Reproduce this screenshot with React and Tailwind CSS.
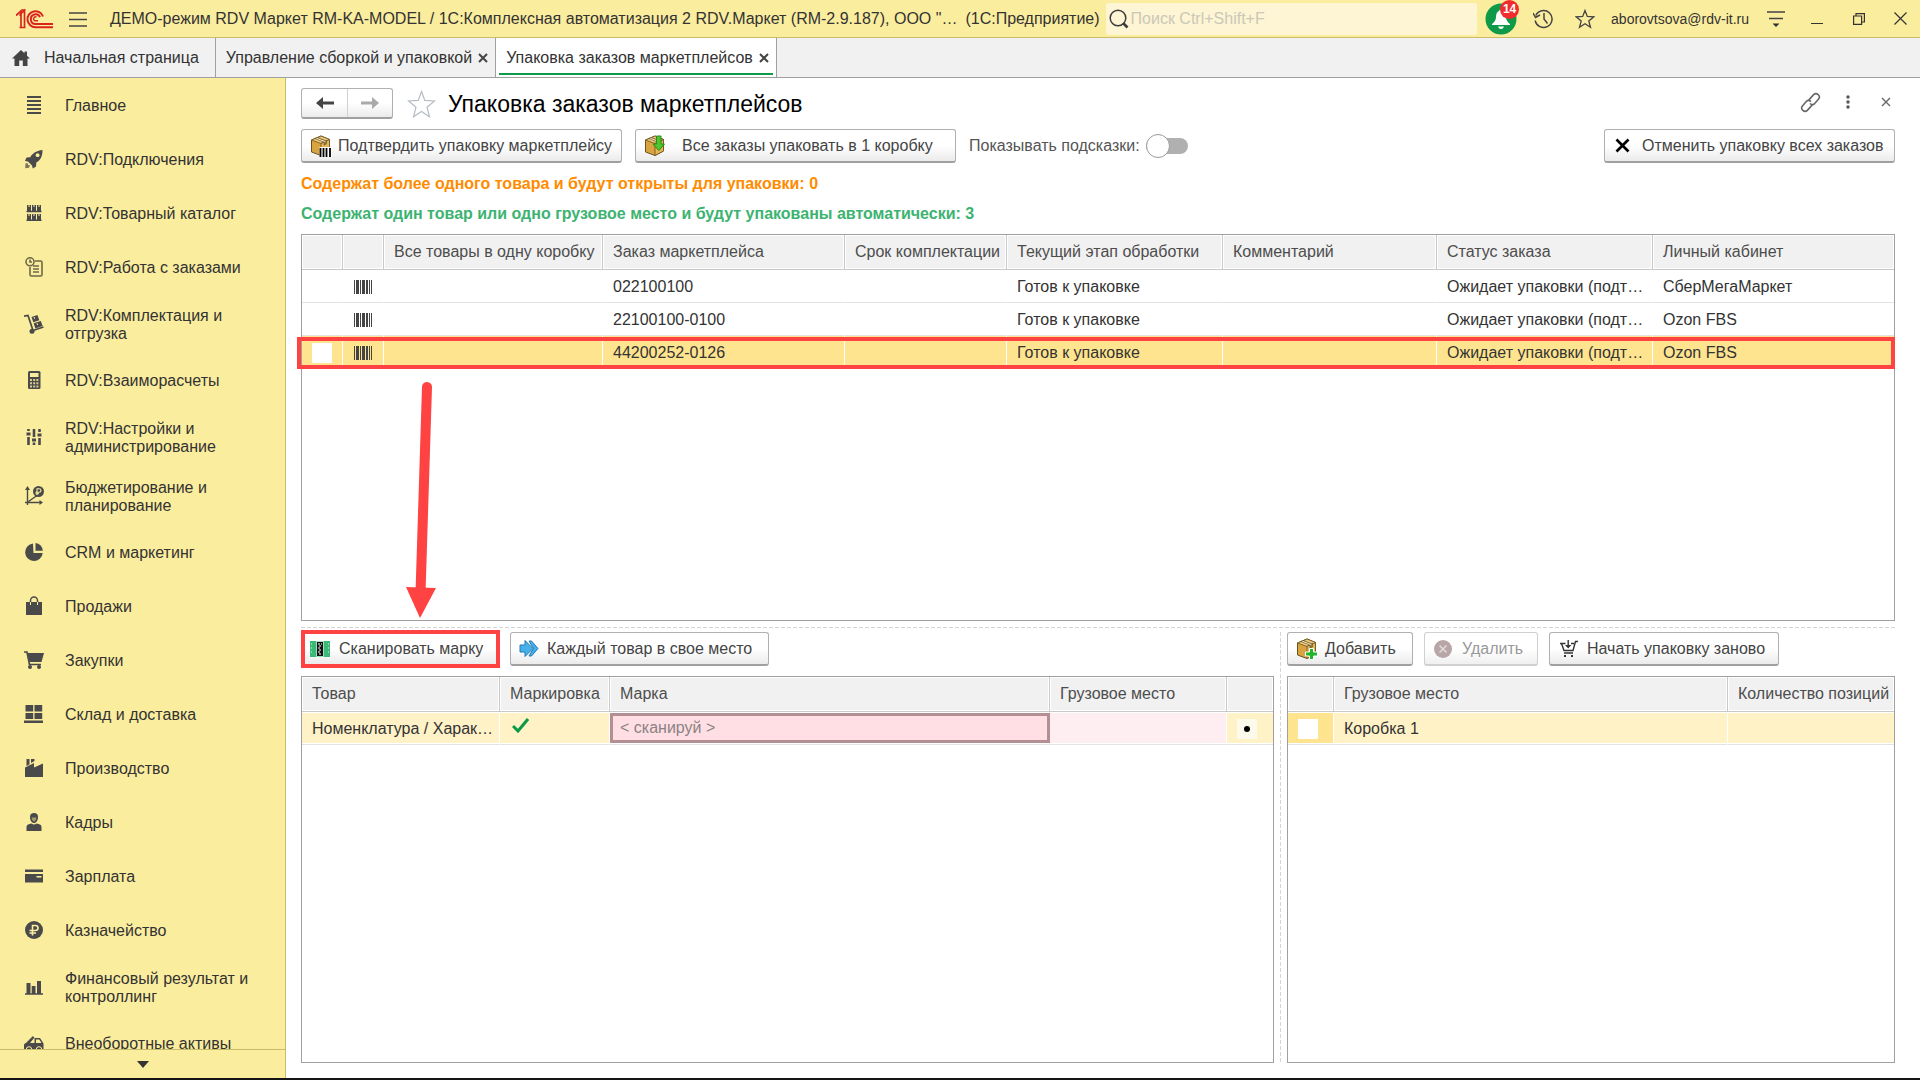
import React from "react";

const BARCODE = [[0, 1], [2, 3], [6, 1], [8, 3], [12, 2], [15, 1], [17, 1]];

function BarcodeIcon() {
  return (
    <svg className="mx-auto block" width="18" height="14" viewBox="0 0 18 14" fill="#444" aria-hidden="true">
      {BARCODE.map(([x, w]) => (
        <rect key={x} x={x} y="0" width={w} height="14" />
      ))}
    </svg>
  );
}

function Box({ children }) {
  return (
    <svg className="shrink-0" width="22" height="22" viewBox="0 0 22 22" aria-hidden="true">
      <path d="M1.5 5 11 1l8.500 3.500V16L11 20.500 1.500 17Z" fill="#d9a440" stroke="#6b5220" strokeWidth="1" />
      <path d="M1.500 5 11 1l8.500 3.500L11 8.500Z" fill="#efc978" stroke="#6b5220" strokeWidth=".8" />
      <path d="M11 8.500v12l8.500-4.500V4.500Z" fill="#e6b658" stroke="#6b5220" strokeWidth=".8" />
      <path d="m5 3.600 9 3.600v3l2.500-1.200V6L7.500 2.500Z" fill="#8d7a4d" stroke="#5d4a22" strokeWidth=".5" />
      <path d="m6.200 3.200 9 3.500" stroke="#f6e6bd" strokeWidth="1" />
      {children}
    </svg>
  );
}

const BoxBarcode = () => (
  <Box>
    <rect x="9.500" y="12" width="12.500" height="10" fill="#fff" />
    <path d="M10.500 13v9M13.500 13v9M16.500 13v9M20 13v9" stroke="#000" strokeWidth="1.800" />
  </Box>
);
const BoxDown = () => (
  <Box>
    <path d="M12.500 1h4.500v8h3.500l-5.700 6.500L9 9h3.500Z" fill="#4fc52f" stroke="#2a8a1b" strokeWidth="1" />
  </Box>
);
const BoxPlus = () => (
  <Box>
    <path d="M13.500 10.500h4v3.500h4v4h-4v3.500h-4V18h-4v-4h4Z" fill="#22b52c" stroke="#fff" strokeWidth="1" />
  </Box>
);

const NAV = [
  {
    label: ["Главное"],
    icon: <path d="M3 2h14M3 6h14M3 10h14M3 14h14M3 18h14" stroke="#4a4a4a" strokeWidth="1.800" />,
  },
  {
    label: ["RDV:Подключения"],
    icon: (
      <g>
        <path d="M18.500 1C12 1.500 8 5 6.200 8.200L2.500 8.500 1 12l3 .5 4 4 .8 3 3.200-2 .3-4C16 11.500 18.500 8 18.500 1Z" />
        <circle cx="13.600" cy="6.200" r="1.900" fill="#fbed9e" />
        <path d="m1.500 14.500 2-.5.500 2 2 .3-1 2.500-3.800.4Z" opacity=".75" />
      </g>
    ),
  },
  {
    label: ["RDV:Товарный каталог"],
    icon: (
      <g>
        <path d="M3 2h4v6H3zM8 2h4v6H8zM13 2h4v6h-4zM3 11h4v6H3zM8 11h4v6H8zM13 11h4v6h-4z" />
        <path d="M2.500 8.500h15M2.500 17.300h15" stroke="#4a4a4a" strokeWidth="1.500" />
        <path d="M5 2v2M10 2v2M15 2v2M5 11v2M10 11v2M15 11v2" stroke="#fbed9e" strokeWidth="1" />
      </g>
    ),
  },
  {
    label: ["RDV:Работа с заказами"],
    icon: (
      <g fill="none" stroke="#6d6848" strokeWidth="1.600">
        <circle cx="6" cy="4.800" r="4" />
        <path d="M6 2.500V5h2M11 4h5.500Q18 4 18 5.500v12q0 1.500-1.500 1.500h-9Q6 19 6 17.500V10M9 9h6M9 12h6M9 15h6" />
      </g>
    ),
  },
  {
    label: ["RDV:Комплектация и", "отгрузка"],
    icon: (
      <g>
        <path d="M0 2.200 4 1.500l5 15L19.500 13" fill="none" stroke="#4a4a4a" strokeWidth="1.700" />
        <path d="m7.500 3 6-2 1.800 5.200-6 2zM9.600 9.300l7.200-2.400 1.900 5-7.300 2.500z" />
        <circle cx="8" cy="17.300" r="2.500" />
        <path d="m10 3 .6 1.800M13 9.200l.6 1.800" stroke="#fbed9e" />
      </g>
    ),
  },
  {
    label: ["RDV:Взаиморасчеты"],
    icon: (
      <g>
        <rect x="4" y="1" width="12.500" height="18" rx="1.500" />
        <path d="M6 3h8.500v4H6z" fill="#fbed9e" />
        <path d="M6 9h2v2H6zM9.200 9h2v2h-2zM12.400 9h2v2h-2zM6 12.200h2v2H6zM9.200 12.200h2v2h-2zM12.400 12.200h2v2h-2zM6 15.400h2v2H6zM9.200 15.400h2v2h-2zM12.400 15.400h2v2h-2z" fill="#fbed9e" opacity=".8" />
      </g>
    ),
  },
  {
    label: ["RDV:Настройки и", "администрирование"],
    icon: (
      <g stroke="#4a4a4a" strokeWidth="2.600">
        <path d="M4.500 2v2M4.500 10v8M10 2v8M10 15.500V18M15.500 2v3M15.500 11v7" />
        <path d="M2.500 7h4M8 13h4M13.500 8h4" strokeWidth="3" />
      </g>
    ),
  },
  {
    label: ["Бюджетирование и", "планирование"],
    icon: (
      <g>
        <path d="M3.500 3v16M1 16.500h16M4.500 15.500 13 9.500" fill="none" stroke="#4a4a4a" strokeWidth="1.400" />
        <path d="M3.500 0 6 4H1zM19 16.500l-3.500-2.500v5z" />
        <circle cx="14.500" cy="5.500" r="5.500" />
        <path d="M13 9V2.800h2.200q1.800 0 1.800 1.700t-1.800 1.700H11.500M11.500 7.800H15" fill="none" stroke="#fbed9e" strokeWidth="1.100" />
      </g>
    ),
  },
  {
    label: ["CRM и маркетинг"],
    icon: (
      <g>
        <path d="M9 1.500A8.800 8.800 0 1 0 18.700 11H9.500Z" />
        <path d="M11.500 1a8 8 0 0 1 7.300 7.800h-7.300Z" />
      </g>
    ),
  },
  {
    label: ["Продажи"],
    icon: (
      <g>
        <path d="M2 6h16v13H2z" />
        <path d="M6.500 9V4.500a3.500 3.500 0 0 1 7 0V9" fill="none" stroke="#4a4a4a" strokeWidth="1.500" />
        <path d="M6.500 6v3M13.500 6v3" stroke="#fbed9e" strokeWidth="1" />
      </g>
    ),
  },
  {
    label: ["Закупки"],
    icon: (
      <g>
        <path d="M0 2h3l2.500 12.500H17" fill="none" stroke="#4a4a4a" strokeWidth="1.700" />
        <path d="M3.500 3H20l-2.500 9H5.500z" />
        <circle cx="6" cy="17" r="2" />
        <circle cx="15" cy="17" r="2" />
      </g>
    ),
  },
  {
    label: ["Склад и доставка"],
    icon: <path d="M1.500 1h7.700v6.500H1.500zM10.500 1h7.700v6.500h-7.700zM1.500 9h7.700v6H1.500zM10.500 9h7.700v6h-7.700zM0 16.500h19V19H0z" />,
  },
  {
    label: ["Производство"],
    icon: <path d="M1 19V9.500L10 5v4.500L19 5.500V19zM2.500 1H5.500v5.500l-3 1.500zM7 1h3.500v2L7 5z" />,
  },
  {
    label: ["Кадры"],
    icon: (
      <g>
        <path d="M6 5a4 4 0 0 1 8 0c0 3.500-1.700 6-4 6S6 8.500 6 5Z" />
        <path d="M2.500 19v-4q0-2.500 3-3l2-.5q2.500 2 5 0l2 .5q3 .5 3 3v4Z" />
        <path d="M7.500 5.500h5q-.3 3.500-2.500 4.300Q7.800 9 7.500 5.500Z" fill="#a39b6c" />
      </g>
    ),
  },
  {
    label: ["Зарплата"],
    icon: (
      <g>
        <path d="M1 3.500h18V6H1zM1 8h18v8.500H1z" />
        <path d="M12.500 10h5v1.500h-5z" fill="#fbed9e" />
      </g>
    ),
  },
  {
    label: ["Казначейство"],
    icon: (
      <g>
        <circle cx="10" cy="10" r="9" />
        <path d="M8.500 15.500V5.500h3q2.500 0 2.500 2.500t-2.500 2.500H5.500M5.500 13H12" fill="none" stroke="#fbed9e" strokeWidth="1.600" />
      </g>
    ),
  },
  {
    label: ["Финансовый результат и", "контроллинг"],
    icon: <path d="M2.500 6h4v10.500h-4zM7.700 9h3.800v7.500H7.700zM13 4h4v12.500h-4zM1 16.300h18v1.500H1z" />,
  },
  {
    label: ["Внеоборотные активы"],
    icon: (
      <g>
        <path d="M0 16v-4.500L8.500 3l2 1.500L6 10h4.500V5H16l3.500 5.500V16Z" />
        <path d="M12 6.500h3.300L17.500 10H12z" fill="#fbed9e" />
        <path d="M1.500 10 8 3.500" stroke="#fbed9e" strokeWidth=".8" />
        <circle cx="5" cy="16.500" r="2.800" stroke="#fbed9e" />
        <circle cx="15" cy="16.500" r="2.800" stroke="#fbed9e" />
      </g>
    ),
  },
];

const btn =
  "flex h-[34px] items-center rounded-[3px] border border-[#b0b0b0] border-b-2 border-b-[#a0a0a0] bg-gradient-to-b from-white from-50% to-[#ebebeb] text-[#444] whitespace-nowrap";

const th =
  "h-[35px] border-b border-r border-[#c9c9c9] bg-[#f1f1f1] shadow-[inset_0_0_0_1px_#fff] px-2.5 text-left font-normal text-[#4d4d4d] last:border-r-0 whitespace-nowrap overflow-hidden";

const ORDERS = [
  { id: "022100100", cabinet: "СберМегаМаркет" },
  { id: "22100100-0100", cabinet: "Ozon FBS" },
  { id: "44200252-0126", cabinet: "Ozon FBS", selected: true },
];

function CloseX({ size, width, color }) {
  return (
    <svg width={size} height={size} viewBox="0 0 10 10" stroke={color} strokeWidth={width} aria-hidden="true">
      <path d="m1 1 8 8M9 1 1 9" />
    </svg>
  );
}

function TopBar() {
  return (
    <header className="flex h-[38px] shrink-0 items-center border-b border-[#c9bb6a] bg-[#fbed9e] text-[#333]">
      <svg className="ml-4 shrink-0" width="38" height="20" viewBox="0 0 38 20" fill="none" stroke="#d9251d" aria-label="1С">
        <path d="M0 6.500 5 2v16.500M3.500 6.500 8.500 1v17.500M3.500 18.500h6M5.500 1h4" strokeWidth="1.700" />
        <path d="M27 7.500A8 8 0 1 0 19.500 18.200H37M24 8.200a4.800 4.800 0 1 0-4.500 6.800H37" strokeWidth="2" />
        <path d="M20.500 8a2 2 0 1 0-1 3.800H22" strokeWidth="1.400" />
      </svg>
      <button type="button" aria-label="Меню" className="ml-[15px] shrink-0">
        <svg width="18" height="16" viewBox="0 0 18 16" stroke="#444" strokeWidth="1.400">
          <path d="M0 2h18M0 8.500h18M0 15h18" />
        </svg>
      </button>
      <span className="ml-[23px] whitespace-nowrap">
        ДЕМО-режим RDV Маркет RM-KA-MODEL / 1С:Комплексная автоматизация 2 RDV.Маркет (RM-2.9.187), ООО "…
      </span>
      <span className="ml-2 whitespace-nowrap">(1С:Предприятие)</span>
      <label className="ml-1.5 flex h-8 min-w-0 flex-1 items-center rounded-[3px] bg-[#fdf5d3] pl-[3px]">
        <svg className="shrink-0" width="20" height="20" viewBox="0 0 20 20" fill="none" stroke="#3c3c3c" aria-hidden="true">
          <circle cx="9" cy="9" r="7.800" strokeWidth="1.500" />
          <path d="m14 14 4.500 4.500" strokeWidth="2.600" />
        </svg>
        <input
          type="search"
          aria-label="Поиск"
          placeholder="Поиск Ctrl+Shift+F"
          className="ml-0.5 min-w-0 flex-1 bg-transparent outline-none placeholder:text-[#cbc8b8]"
        />
      </label>
      <button type="button" aria-label="Уведомления" className="relative ml-2 shrink-0">
        <svg className="block" width="32" height="32" viewBox="0 0 32 32" aria-hidden="true">
          <circle cx="16" cy="16" r="15.500" fill="#0e9a48" />
          <path d="M16 6q1.500 0 1.700 1.700Q21 9 21 14q0 4 4 7v1H7v-1q4-3 4-7 0-5 3.300-6.300Q14.500 6 16 6ZM13 23.500h6q-.8 2.500-3 2.500t-3-2.500Z" fill="#fff" />
        </svg>
        <span className="absolute -top-[3px] left-[15px] flex h-[19px] w-[19px] items-center justify-center rounded-full bg-[#f22c2c] text-xs font-bold text-white">
          14
        </span>
      </button>
      <button type="button" aria-label="История" className="ml-4 shrink-0">
        <svg width="21" height="21" viewBox="0 0 21 21" fill="none" stroke="#444" strokeWidth="1.500">
          <path d="M2.800 7.500a8.500 8.500 0 1 1-.6 5M11 5v6l3.500 4.500" />
          <path d="m0 5 2.500 4.500L7 7" />
        </svg>
      </button>
      <button type="button" aria-label="Избранное" className="ml-[21px] shrink-0">
        <svg width="20" height="20" viewBox="0 0 20 20" fill="none" stroke="#444" strokeWidth="1.300">
          <path d="m10 1.500 2.300 5.900 6.500.4-5 4.100 1.700 6.400L10 14.800l-5.500 3.500 1.700-6.400-5-4.100 6.500-.4Z" />
        </svg>
      </button>
      <span className="ml-4 text-[14px]">aborovtsova@rdv-it.ru</span>
      <button type="button" aria-label="Сервис" className="ml-[18px] shrink-0">
        <svg width="18" height="18" viewBox="0 0 18 18" stroke="#444" strokeWidth="1.500" fill="#333">
          <path d="M0 2h18M2 8.500h14" />
          <path d="M5.500 13.500h7L9 17z" stroke="none" />
        </svg>
      </button>
      <button type="button" aria-label="Свернуть" className="ml-[26px] shrink-0">
        <svg width="12" height="12" viewBox="0 0 12 12" stroke="#333">
          <path d="M0 10.500h12" />
        </svg>
      </button>
      <button type="button" aria-label="Развернуть" className="ml-[30px] shrink-0">
        <svg width="12" height="12" viewBox="0 0 12 12" fill="none" stroke="#333" strokeWidth="1.200">
          <path d="M.6 3h8v8.400h-8zM3 3V.6h8.400V9H8.600" />
        </svg>
      </button>
      <button type="button" aria-label="Закрыть" className="ml-7 mr-3 shrink-0">
        <CloseX size={15} width={0.8} color="#333" />
      </button>
    </header>
  );
}

function Tabs() {
  return (
    <nav className="flex h-10 shrink-0 border-b border-[#a0a0a0] bg-[#f1f1f1] text-[#333]">
      <a href="#home" className="flex items-center border-r border-[#a0a0a0] pl-3 pr-4 whitespace-nowrap">
        <svg className="mr-3.5" width="18" height="16" viewBox="0 0 18 16" fill="#444" aria-hidden="true">
          <path d="M9 0 0 8.500h2.500V16h4.700v-5.500h3.600V16h4.700V8.500H18l-3-2.800V1.500h-2.500v1.800Z" />
        </svg>
        Начальная страница
      </a>
      <div className="flex items-center border-r border-[#a0a0a0] pl-2.5 pr-[7px] whitespace-nowrap">
        <a href="#assembly">Управление сборкой и упаковкой</a>
        <button type="button" aria-label="Закрыть вкладку" className="ml-1.5">
          <CloseX size={10} width={2} color="#444" />
        </button>
      </div>
      <div className="border-r border-[#a0a0a0] bg-white px-[3px] pb-0.5">
        <div className="flex h-full items-center border-b-2 border-[#0e9a48] pl-[7px] pr-1 pt-1 whitespace-nowrap">
          <a href="#packing">Упаковка заказов маркетплейсов</a>
          <button type="button" aria-label="Закрыть вкладку" className="ml-1.5">
            <CloseX size={10} width={2} color="#444" />
          </button>
        </div>
      </div>
    </nav>
  );
}

function Sidebar() {
  return (
    <aside className="flex w-[286px] shrink-0 flex-col border-r border-[#c9bb6a] bg-[#fbed9e] text-[#333]">
      <ul className="min-h-0 flex-1 overflow-hidden">
        {NAV.map((item) => (
          <li key={item.label[0]}>
            <a href="#section" className={`flex items-center pl-6 leading-[18px] ${item.label.length > 1 ? "h-[59px]" : "h-[54px]"}`}>
              <svg className="mr-[21px] shrink-0" width="20" height="20" viewBox="0 0 20 20" fill="#4a4a4a" aria-hidden="true">
                {item.icon}
              </svg>
              <span className="whitespace-nowrap pt-0.5">
                {item.label.map((line) => (
                  <span key={line} className="block">{line}</span>
                ))}
              </span>
            </a>
          </li>
        ))}
      </ul>
      <button type="button" aria-label="Прокрутить вниз" className="flex h-[29px] shrink-0 items-center justify-center border-t border-[#c9bb6a]">
        <svg width="12" height="7" viewBox="0 0 12 7" fill="#333"><path d="M0 0h12L6 7z" /></svg>
      </button>
    </aside>
  );
}

function OrdersTable() {
  return (
    <section className="relative min-h-0 flex-1 border border-[#a0a0a0]">
      <table className="w-full table-fixed border-separate border-spacing-0">
        <colgroup>
          <col className="w-[41px]" />
          <col className="w-[41px]" />
          <col className="w-[219px]" />
          <col className="w-[242px]" />
          <col className="w-[162px]" />
          <col className="w-[216px]" />
          <col className="w-[214px]" />
          <col className="w-[216px]" />
          <col />
        </colgroup>
        <thead>
          <tr>
            {["", " ", "Все товары в одну коробку", "Заказ маркетплейса", "Срок комплектации", "Текущий этап обработки", "Комментарий", "Статус заказа", "Личный кабинет"].map((h) => (
              <th key={h} className={th}>{h}</th>
            ))}
          </tr>
        </thead>
        <tbody>
          {ORDERS.map((o) => {
            const cell = o.selected
              ? "h-[33px] border-b border-b-[#e3e3e3] border-r border-r-white bg-[#ffe48f] px-2.5 pt-0.5 whitespace-nowrap overflow-hidden last:border-r-0"
              : "h-[33px] border-b border-b-[#e3e3e3] border-r border-r-transparent px-2.5 pt-0.5 whitespace-nowrap overflow-hidden last:border-r-0";
            return (
              <tr key={o.id}>
                <td className={cell}>
                  {o.selected && (
                    <input type="checkbox" aria-label="Выбрать заказ" className="block h-5 w-5 appearance-none bg-white" />
                  )}
                </td>
                <td className={cell}><BarcodeIcon /></td>
                <td className={cell} />
                <td className={cell}>{o.id}</td>
                <td className={cell} />
                <td className={cell}>Готов к упаковке</td>
                <td className={cell} />
                <td className={cell}>Ожидает упаковки (подт…</td>
                <td className={cell}>{o.cabinet}</td>
              </tr>
            );
          })}
        </tbody>
      </table>
      <div className="pointer-events-none absolute -left-[5px] -right-px top-[102px] h-8 border-4 border-[#ff4242]" />
      <svg className="pointer-events-none absolute left-[103px] top-[146px]" width="32" height="237" viewBox="0 0 32 237" aria-hidden="true">
        <path d="M22 6 15.500 212" stroke="#ff4242" strokeWidth="10" strokeLinecap="round" />
        <path d="M1 206 31 207 15 237Z" fill="#ff4242" />
      </svg>
    </section>
  );
}

function ItemsPane() {
  const cell = "h-[33px] border-b border-b-[#e3e3e3] border-r border-r-white bg-[#fff2c7] px-2.5 pt-0.5 whitespace-nowrap overflow-hidden last:border-r-0 shadow-[inset_0_1px_0_#fff,inset_0_-1px_0_#fff]";
  return (
    <section className="flex min-w-0 flex-col">
      <div className="flex h-11 shrink-0 items-start gap-2.5">
        <div className="relative">
          <button type="button" className={`${btn} w-[199px] pl-2`}>
            <svg className="mr-[9px] shrink-0" width="20" height="18" viewBox="0 0 20 18" aria-hidden="true">
              <rect y="1" width="20" height="16" fill="#3cb878" />
              <path d="M1 4h1M1 8h1M1 12h1M18 4h1M18 8h1M18 12h1" stroke="#d8f5e4" />
              <rect x="6" y="1" width="8" height="16" fill="#9fe0bd" />
              <rect x="7" y="2" width="6" height="14" fill="#111" />
              <path d="M8 4h4M9 6h3M8 8h2M9 10h3M8 12h3M9 14h3" stroke="#fff" strokeDasharray="2 1" />
            </svg>
            Сканировать марку
          </button>
          <div className="pointer-events-none absolute -inset-y-0.5 inset-x-0 border-4 border-[#ff4242]" />
        </div>
        <button type="button" className={`${btn} w-[259px] pl-2`}>
          <svg className="mr-2 shrink-0" width="20" height="20" viewBox="0 0 20 20" fill="#45b0ea" stroke="#2478b5" aria-hidden="true">
            <path d="M10 2h2.500L19 9.500 12.500 17H10l4.500-7.500Z" />
            <path d="M1 6h5V1.500l8 8-8 8V13H1Z" />
          </svg>
          Каждый товар в свое место
        </button>
      </div>
      <div className="min-h-0 flex-1 border border-[#a0a0a0]">
        <table className="w-full table-fixed border-separate border-spacing-0">
          <colgroup>
            <col className="w-[198px]" />
            <col className="w-[110px]" />
            <col />
            <col className="w-[177px]" />
            <col className="w-[46px]" />
          </colgroup>
          <thead>
            <tr>
              {["Товар", "Маркировка", "Марка", "Грузовое место", ""].map((h) => (
                <th key={h} className={th}>{h}</th>
              ))}
            </tr>
          </thead>
          <tbody>
            <tr>
              <td className={cell}>Номенклатура / Харак…</td>
              <td className={cell}>
                <svg className="mb-2 ml-0.5 block" width="17" height="15" viewBox="0 0 17 15" fill="none" stroke="#0a9a48" strokeWidth="3" aria-label="Да">
                  <path d="m1 8 5 5L16 1" />
                </svg>
              </td>
              <td className="h-[33px] border-b border-[#e3e3e3] p-0">
                <input
                  type="text"
                  aria-label="Марка"
                  placeholder="< сканируй >"
                  className="block h-[30px] w-full border-3 border-[#b38f94] bg-[#ffdfe3] pl-[7px] outline-none placeholder:text-[#8a8285]"
                />
              </td>
              <td className="border-b border-r border-b-[#e3e3e3] border-r-white bg-[#ffeef1] shadow-[inset_0_1px_0_#fff,inset_0_-1px_0_#fff]" />
              <td className={cell}>
                <span className="flex h-5 w-5 items-center justify-center bg-[#fcfaea]">
                  <span className="h-1.5 w-1.5 rounded-full bg-black" />
                </span>
              </td>
            </tr>
          </tbody>
        </table>
      </div>
    </section>
  );
}

function BoxesPane() {
  const cell = "h-[33px] border-b border-b-[#e3e3e3] border-r border-r-white px-2.5 pt-0.5 whitespace-nowrap last:border-r-0 shadow-[inset_0_1px_0_#fff,inset_0_-1px_0_#fff]";
  return (
    <section className="flex min-w-0 flex-col">
      <div className="flex h-11 shrink-0 items-start gap-[11px]">
        <button type="button" className={`${btn} w-[126px] gap-[7px] pl-2`}>
          <BoxPlus />
          Добавить
        </button>
        <button type="button" disabled className="flex h-[34px] w-[114px] items-center gap-2.5 rounded-[3px] border border-b-2 border-[#d0d0d0] bg-gradient-to-b from-white from-50% to-[#f0f0f0] pl-[9px] text-[#999]">
          <svg width="18" height="18" viewBox="0 0 18 18" aria-hidden="true">
            <circle cx="9" cy="9" r="9" fill="#b8a5a5" />
            <path d="m5.500 5.500 7 7M12.500 5.500l-7 7" stroke="#e5dcdc" strokeWidth="1.500" />
          </svg>
          Удалить
        </button>
        <button type="button" className={`${btn} w-[230px] gap-[9px] pl-2.5`}>
          <svg width="18" height="18" viewBox="0 0 18 18" fill="none" stroke="#333" strokeWidth="1.400" aria-hidden="true">
            <path d="M0 3.500h5.500M11 3.500h3M1.500 3.500 4 10.500h9L15.500 1.500H18M4 13h9M8.200 0v6" />
            <path d="m5 5 3.200 3.500L11.400 5z" fill="#333" stroke="none" />
            <path d="M4 15h2v2H4zM11 15h2v2h-2z" fill="#333" stroke="none" />
          </svg>
          Начать упаковку заново
        </button>
      </div>
      <div className="min-h-0 flex-1 border border-[#a0a0a0]">
        <table className="w-full table-fixed border-separate border-spacing-0">
          <colgroup>
            <col className="w-[46px]" />
            <col />
            <col className="w-[166px]" />
          </colgroup>
          <thead>
            <tr>
              {["", "Грузовое место", "Количество позиций"].map((h) => (
                <th key={h} className={th}>{h}</th>
              ))}
            </tr>
          </thead>
          <tbody>
            <tr>
              <td className={`${cell} bg-[#ffe48f]`}>
                <input type="checkbox" aria-label="Выбрать коробку" className="block h-5 w-5 appearance-none bg-white" />
              </td>
              <td className={`${cell} bg-[#fff2c7]`}>Коробка 1</td>
              <td className={`${cell} bg-[#fff2c7]`} />
            </tr>
          </tbody>
        </table>
      </div>
    </section>
  );
}

export default function App() {
  return (
    <div className="flex h-screen flex-col overflow-hidden border-b-2 border-[#141414] bg-white font-['Liberation_Sans',Arial,sans-serif] text-[16px] leading-5 text-[#333]">
      <TopBar />
      <Tabs />
      <div className="flex min-h-0 flex-1">
        <Sidebar />
        <main className="flex min-w-0 flex-1 flex-col pb-[15px] pl-[15px] pr-[25px] pt-2.5">
          <div className="flex h-[31px] shrink-0 items-center">
            <div className="flex h-[31px] rounded-[3px] border border-b-2 border-[#b0b0b0] border-b-[#a0a0a0] bg-gradient-to-b from-white from-50% to-[#ebebeb]">
              <button type="button" aria-label="Назад" className="flex w-[46px] items-center justify-center border-r border-[#d0d0d0]">
                <svg width="18" height="12" viewBox="0 0 18 12" fill="#444"><path d="M0 6 7 0v4.500h11v3H7V12z" /></svg>
              </button>
              <button type="button" aria-label="Вперед" className="flex w-11 items-center justify-center">
                <svg width="18" height="12" viewBox="0 0 18 12" fill="#aaa"><path d="M18 6 11 0v4.500H0v3h11V12z" /></svg>
              </button>
            </div>
            <button type="button" aria-label="В избранное" className="ml-3.5">
              <svg width="29" height="28" viewBox="0 0 29 28" fill="#fff" stroke="#b5bcc4" strokeWidth="1.200">
                <path d="m14.500 1.500 3.300 8.900 9.700.5-7.500 6.300 2.500 9.600-8-5.300-8 5.300L9 17.200l-7.500-6.300 9.700-.5Z" />
              </svg>
            </button>
            <h1 className="ml-3 text-[23px] leading-7 text-black">Упаковка заказов маркетплейсов</h1>
            <div className="ml-auto flex items-center pb-[3px]">
              <button type="button" aria-label="Получить ссылку">
                <svg width="21" height="21" viewBox="0 0 20 20" fill="none" stroke="#666" strokeWidth="1.500" strokeLinecap="round">
                  <path d="M8.500 7.500 13 2.500q2-2 4.300 0t.2 4.500l-3.500 4q-2 1.800-4 .3M11.500 12.500 7 17.500q-2 2-4.300 0T2.500 13L6 9q2-1.800 4-.3" />
                </svg>
              </button>
              <button type="button" aria-label="Еще" className="ml-[25px]">
                <svg width="4" height="14" viewBox="0 0 4 14" fill="#555">
                  <circle cx="2" cy="2" r="1.700" /><circle cx="2" cy="7" r="1.700" /><circle cx="2" cy="12" r="1.700" />
                </svg>
              </button>
              <button type="button" aria-label="Закрыть" className="ml-[31px] mr-1">
                <CloseX size={10} width={1.4} color="#666" />
              </button>
            </div>
          </div>

          <div className="mt-2.5 flex h-[34px] shrink-0 items-center">
            <button type="button" className={`${btn} w-[321px] gap-1.5 pl-2`}>
              <BoxBarcode />
              Подтвердить упаковку маркетплейсу
            </button>
            <button type="button" className={`${btn} ml-[13px] w-[321px] gap-4 pl-2`}>
              <BoxDown />
              Все заказы упаковать в 1 коробку
            </button>
            <label className="ml-[13px] flex items-center text-[#555]">
              Показывать подсказки:
              <span className="relative ml-1.5 flex h-6 w-[42px] items-center">
                <input type="checkbox" role="switch" className="h-4 w-full appearance-none rounded-full bg-[#b0b0b0]" />
                <span className="pointer-events-none absolute left-0 top-0 h-6 w-6 rounded-full border border-[#999] bg-white" />
              </span>
            </label>
            <button type="button" className={`${btn} ml-auto w-[291px] gap-3 pl-2.5`}>
              <CloseX size={15} width={1.8} color="#000" />
              Отменить упаковку всех заказов
            </button>
          </div>

          <p className="mt-[11px] shrink-0 font-bold text-[#ff8c00]">Содержат более одного товара и будут открыты для упаковки: 0</p>
          <p className="my-2.5 shrink-0 font-bold text-[#3cb371]">Содержат один товар или одно грузовое место и будут упакованы автоматически: 3</p>

          <OrdersTable />
          <div className="mb-1 mt-1.5 h-px shrink-0 bg-[repeating-linear-gradient(90deg,#d5d5d5_0_4px,transparent_4px_6px)]" />
          <div className="grid min-h-0 shrink grow basis-[46px] grid-cols-[973fr_13px_608fr] grid-rows-[minmax(0,1fr)]">
            <ItemsPane />
            <div className="mx-auto w-px bg-[repeating-linear-gradient(180deg,#d5d5d5_0_4px,transparent_4px_6px)]" />
            <BoxesPane />
          </div>
        </main>
      </div>
    </div>
  );
}
